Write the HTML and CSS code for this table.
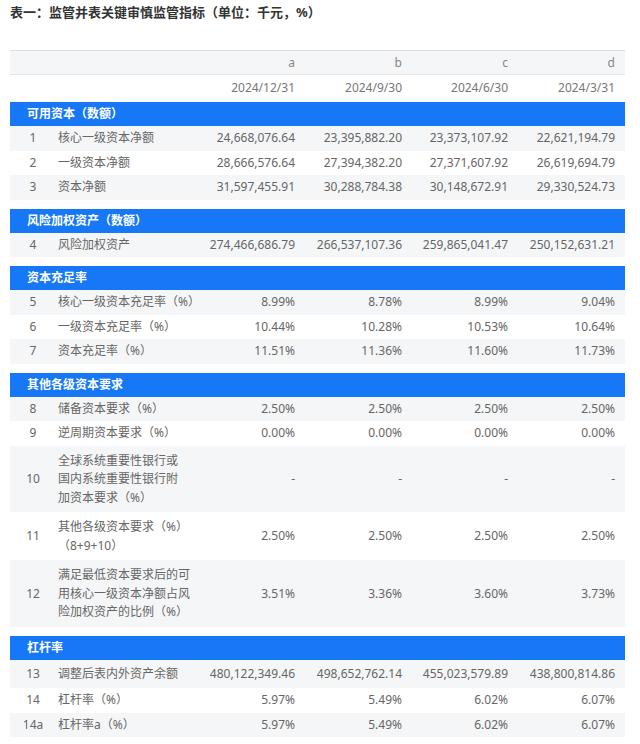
FILE: index.html
```html
<!DOCTYPE html>
<html lang="zh">
<head>
<meta charset="utf-8">
<title>表一</title>
<link rel="stylesheet" href="styles.css">
</head>
<body>
<h1 class="title">表一：监管并表关键审慎监管指标（单位：千元，%）</h1>
<table class="grid">
  <colgroup>
    <col class="c-no"><col class="c-label"><col class="c-val"><col class="c-val"><col class="c-val2"><col class="c-val">
  </colgroup>
  <thead>
    <tr class="head-letters"><th></th><th></th><th>a</th><th>b</th><th>c</th><th>d</th></tr>
    <tr class="head-dates"><th></th><th></th><th>2024/12/31</th><th>2024/9/30</th><th>2024/6/30</th><th>2024/3/31</th></tr>
  </thead>
  <tbody>
    <tr class="sec"><td colspan="6">可用资本（数额）</td></tr>
    <tr class="odd"><td class="no">1</td><td class="lbl">核心一级资本净额</td><td>24,668,076.64</td><td>23,395,882.20</td><td>23,373,107.92</td><td>22,621,194.79</td></tr>
    <tr><td class="no">2</td><td class="lbl">一级资本净额</td><td>28,666,576.64</td><td>27,394,382.20</td><td>27,371,607.92</td><td>26,619,694.79</td></tr>
    <tr class="odd"><td class="no">3</td><td class="lbl">资本净额</td><td>31,597,455.91</td><td>30,288,784.38</td><td>30,148,672.91</td><td>29,330,524.73</td></tr>
    <tr class="gap"><td colspan="6"></td></tr>
    <tr class="sec"><td colspan="6">风险加权资产（数额）</td></tr>
    <tr class="odd"><td class="no">4</td><td class="lbl">风险加权资产</td><td>274,466,686.79</td><td>266,537,107.36</td><td>259,865,041.47</td><td>250,152,631.21</td></tr>
    <tr class="gap"><td colspan="6"></td></tr>
    <tr class="sec"><td colspan="6">资本充足率</td></tr>
    <tr class="odd"><td class="no">5</td><td class="lbl">核心一级资本充足率（%）</td><td>8.99%</td><td>8.78%</td><td>8.99%</td><td>9.04%</td></tr>
    <tr><td class="no">6</td><td class="lbl">一级资本充足率（%）</td><td>10.44%</td><td>10.28%</td><td>10.53%</td><td>10.64%</td></tr>
    <tr class="odd"><td class="no">7</td><td class="lbl">资本充足率（%）</td><td>11.51%</td><td>11.36%</td><td>11.60%</td><td>11.73%</td></tr>
    <tr class="gap"><td colspan="6"></td></tr>
    <tr class="sec"><td colspan="6">其他各级资本要求</td></tr>
    <tr class="odd"><td class="no">8</td><td class="lbl">储备资本要求（%）</td><td>2.50%</td><td>2.50%</td><td>2.50%</td><td>2.50%</td></tr>
    <tr><td class="no">9</td><td class="lbl">逆周期资本要求（%）</td><td>0.00%</td><td>0.00%</td><td>0.00%</td><td>0.00%</td></tr>
    <tr class="odd tall"><td class="no">10</td><td class="lbl">全球系统重要性银行或<br>国内系统重要性银行附<br>加资本要求（%）</td><td>-</td><td>-</td><td>-</td><td>-</td></tr>
    <tr class="tall"><td class="no">11</td><td class="lbl">其他各级资本要求（%）<br>（8+9+10）</td><td>2.50%</td><td>2.50%</td><td>2.50%</td><td>2.50%</td></tr>
    <tr class="odd tall"><td class="no">12</td><td class="lbl">满足最低资本要求后的可<br>用核心一级资本净额占风<br>险加权资产的比例（%）</td><td>3.51%</td><td>3.36%</td><td>3.60%</td><td>3.73%</td></tr>
    <tr class="gap"><td colspan="6"></td></tr>
    <tr class="sec"><td colspan="6">杠杆率</td></tr>
    <tr class="odd r13"><td class="no">13</td><td class="lbl">调整后表内外资产余额</td><td>480,122,349.46</td><td>498,652,762.14</td><td>455,023,579.89</td><td>438,800,814.86</td></tr>
    <tr><td class="no">14</td><td class="lbl">杠杆率（%）</td><td>5.97%</td><td>5.49%</td><td>6.02%</td><td>6.07%</td></tr>
    <tr class="odd"><td class="no">14a</td><td class="lbl">杠杆率a（%）</td><td>5.97%</td><td>5.49%</td><td>6.02%</td><td>6.07%</td></tr>
  </tbody>
</table>
</body>
</html>
```
FILE: styles.css
```css
html, body {
  margin: 0;
  padding: 0;
  background: #ffffff;
}
body {
  font-family: "Noto Sans", "Noto Sans CJK SC", sans-serif;
  color: #666666;
  font-size: 12px;
}
.title {
  margin: 0 0 26px 10px;
  font-size: 13px;
  line-height: 24px;
  font-weight: bold;
  color: #333333;
}
.grid {
  margin-left: 10px;
  width: 615px;
  border-collapse: collapse;
  border-spacing: 0;
  table-layout: fixed;
}
.c-no { width: 46px; }
.c-label { width: 142px; }
.c-val { width: 107px; }
.c-val2 { width: 106px; }
.grid th, .grid td {
  padding: 3px 10px 3px 0;
  line-height: 18.5px;
  text-align: right;
  font-weight: normal;
  white-space: nowrap;
}
.head-letters th {
  background: #f5f6f7;
  border-top: 1px solid #dedede;
  border-bottom: 1px solid #e6e6e6;
  color: #888888;
  line-height: 18px;
  padding-top: 3px;
  padding-bottom: 2px;
}
.head-dates th {
  color: #777777;
  line-height: 18px;
  padding-top: 4px;
  padding-bottom: 5px;
}
.grid .sec td {
  background: #1677f7;
  color: #ffffff;
  font-weight: bold;
  text-align: left;
  padding-left: 17px;
  line-height: 18px;
}
.odd td {
  background: #f5f6f7;
}
.grid td.no {
  text-align: center;
  padding-right: 0;
}
.grid td.lbl {
  text-align: left;
  padding-left: 2px;
}
.grid .tall td {
  padding-top: 6px;
  padding-bottom: 5px;
}
.grid .r13 td {
  padding-top: 5px;
  padding-bottom: 5px;
}
.grid .gap td {
  height: 9px;
  padding: 0;
  line-height: 9px;
  background: #ffffff;
}
```
